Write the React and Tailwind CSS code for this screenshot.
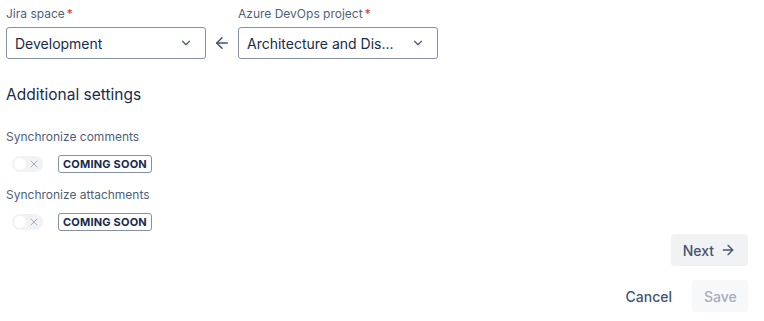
import { ChevronDown, ArrowLeft, ArrowRight, X } from "lucide-react";

function Select({ label, value }) {
  return (
    <div className="flex flex-col w-[200px]">
      <label className="text-[12px] leading-[16px] text-[#505F79] mb-[5px] mt-[6px]">
        {label}
        <span className="text-[#DE350B] ml-[2px]">*</span>
      </label>
      <div className="flex items-center justify-between h-[32px] border border-[#8590A2] rounded-[3px] pl-[8px] pr-[12px] bg-white">
        <span className="text-[14px] text-[#172B4D] truncate">{value}</span>
        <ChevronDown size={14} strokeWidth={2} className="text-[#44546F]" />
      </div>
    </div>
  );
}

function SettingRow({ label }) {
  return (
    <div className="flex flex-col">
      <div className="text-[12px] leading-[16px] text-[#505F79]">{label}</div>
      <div className="flex items-center mt-[10px] ml-[6px]">
        <div className="relative w-[31px] h-[16px] rounded-full bg-[#F1F2F4]">
          <div className="absolute left-[2px] top-[2px] w-[12px] h-[12px] rounded-full bg-white" />
          <X size={12} strokeWidth={1.75} className="absolute right-[3px] top-[2px] text-[#98A2B1]" />
        </div>
        <span className="ml-[15px] border border-[#8590A2] rounded-[3px] px-[4px] h-[18px] flex items-center text-[11px] font-bold text-[#172B4D] tracking-[0.2px]">
          COMING SOON
        </span>
      </div>
    </div>
  );
}

export default function App() {
  return (
    <div className="w-[764px] h-[321px] bg-white px-[6px] font-['Inter',sans-serif] flex flex-col">
      <div className="flex items-end">
        <Select label="Jira space" value="Development" />
        <div className="w-[32px] h-[32px] flex items-center justify-center">
          <ArrowLeft size={18} strokeWidth={2} className="text-[#44546F]" />
        </div>
        <Select label="Azure DevOps project" value="Architecture and Dis..." />
      </div>

      <h2 className="text-[15.5px] text-[#172B4D] mt-[26px] leading-[20px]">Additional settings</h2>

      <div className="mt-[24px] flex flex-col gap-[14px]">
        <SettingRow label="Synchronize comments" />
        <SettingRow label="Synchronize attachments" />
      </div>

      <div className="flex justify-end mt-[3px] pr-[10px]">
        <button className="h-[32px] px-[12px] rounded-[3px] bg-[#F1F2F4] text-[14px] font-medium text-[#44546F] flex items-center gap-[6px]">
          Next
          <ArrowRight size={16} strokeWidth={2} />
        </button>
      </div>

      <div className="flex justify-end items-center mt-[14px] pr-[10px] gap-[8px]">
        <button className="h-[32px] px-[12px] text-[14px] font-medium text-[#44546F]">Cancel</button>
        <button className="h-[32px] px-[12px] rounded-[3px] bg-[#F7F8F9] text-[14px] font-medium text-[#A5ADBA] w-[56px]">
          Save
        </button>
      </div>
    </div>
  );
}
